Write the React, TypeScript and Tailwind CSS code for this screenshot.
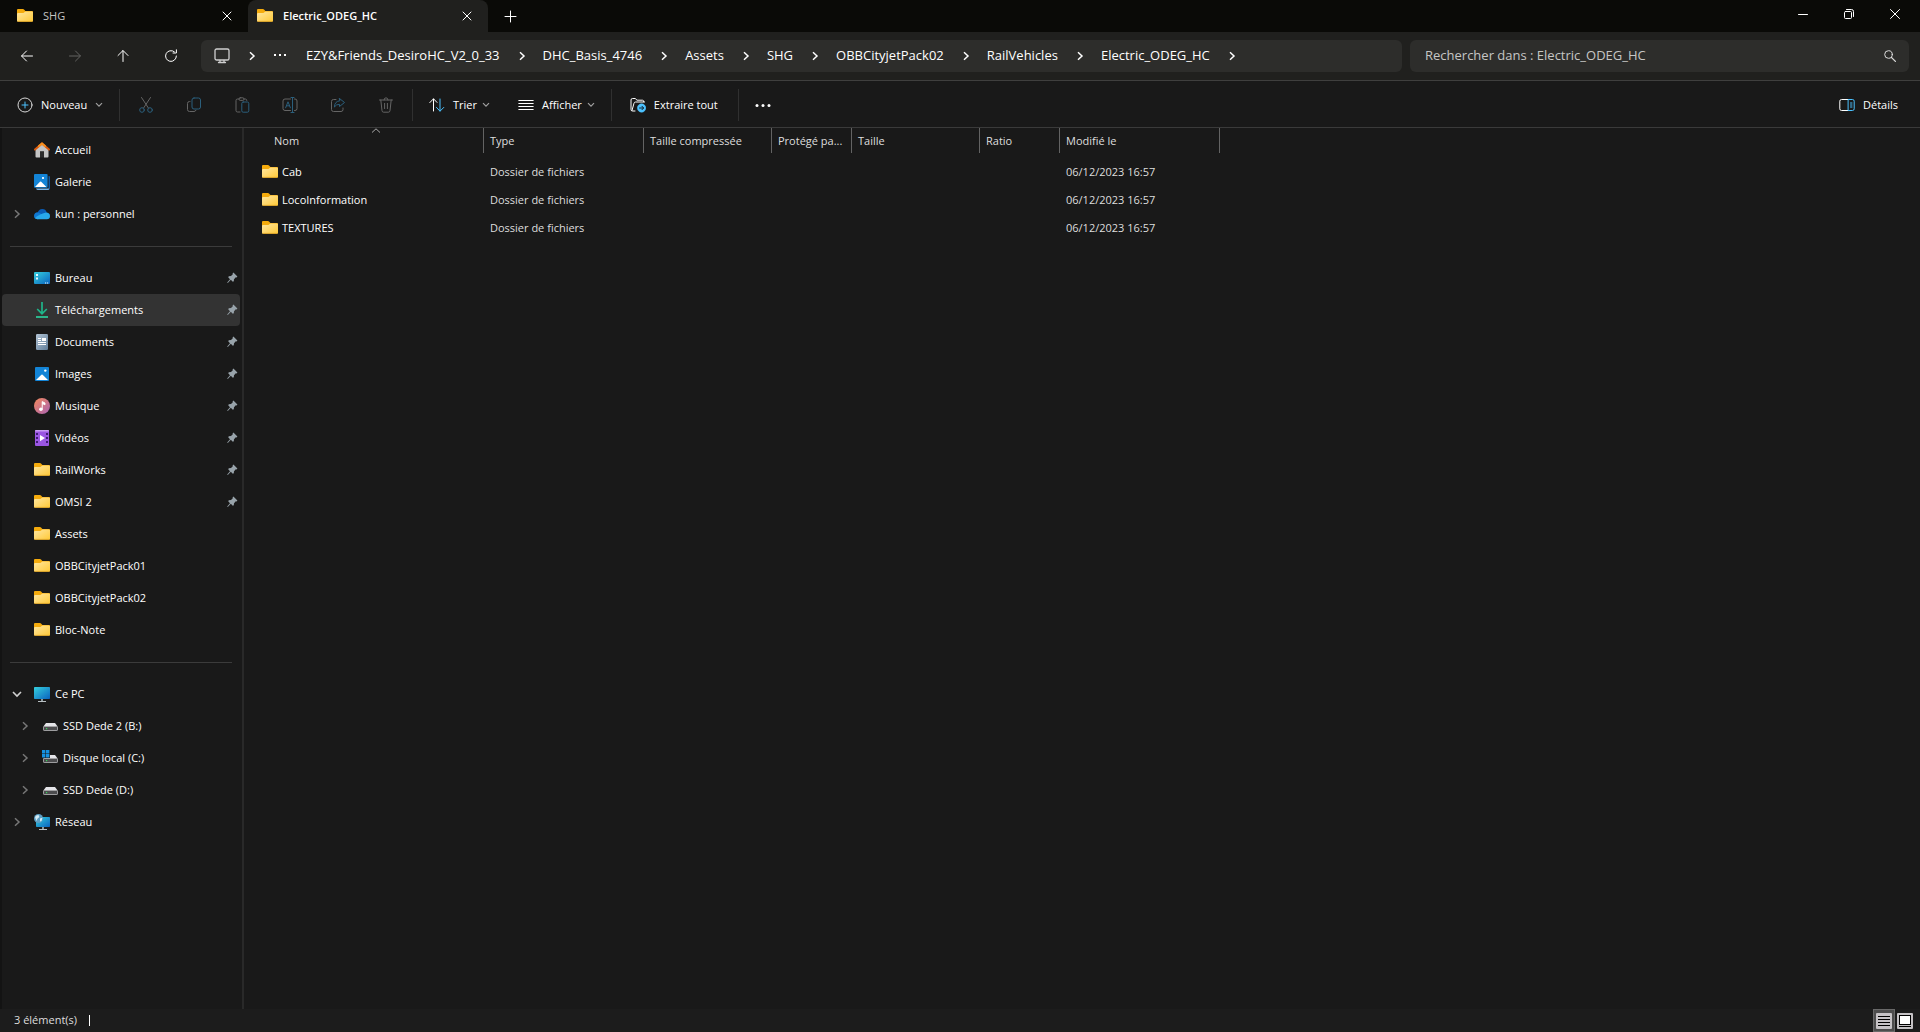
import { Fragment, useState, type ReactNode } from 'react';

type IconProps = { className?: string };

// Coloured shell icons

const FolderIcon = () => (
  <svg width="16" height="16" viewBox="0 0 16 16" className="shrink-0" aria-hidden="true">
    <defs>
      <linearGradient id="folderFront" x1="0" y1="0" x2="1" y2="1">
        <stop offset="0" stopColor="#ffe7a2" />
        <stop offset="1" stopColor="#ffc937" />
      </linearGradient>
    </defs>
    <path d="M0 2Q0 1 1 1H6Q6.6 1 7 1.4L8.4 3H15Q16 3 16 4V7H0Z" fill="#f5ab0c" />
    <path d="M0 6Q0 5 1 5H6.4L8.4 3.4H15Q16 3.4 16 4.4V12.8Q16 13.8 15 13.8H1Q0 13.8 0 12.8Z" fill="url(#folderFront)" />
    <path d="M.5 13.4H15.5" stroke="#e0a526" strokeWidth=".8" />
  </svg>
);

const HomeIcon = () => (
  <svg width="16" height="16" viewBox="0 0 16 16" className="shrink-0" aria-hidden="true">
    <path d="M1.5 7L8 1.6L14.5 7V14.5Q14.5 15.5 13.5 15.5H10V9.5H6V15.5H2.5Q1.5 15.5 1.5 14.5Z" fill="#c4c4c4" />
    <path d="M6 9.5H10V15.5H6Z" fill="#2b2b2b" />
    <path d="M1 7.6L8 1.4L15 7.6" fill="none" stroke="#d9590c" strokeWidth="2" strokeLinecap="round" strokeLinejoin="round" />
    <path d="M5 4L8 1.4L11 4" fill="none" stroke="#f78f1e" strokeWidth="2" strokeLinecap="round" strokeLinejoin="round" />
  </svg>
);

const GalleryIcon = () => (
  <svg width="16" height="16" viewBox="0 0 16 16" className="shrink-0" aria-hidden="true">
    <path d="M14.5 2H15Q16 2 16 3V14Q16 15 15 15H14.5Z" fill="#0c59a4" />
    <path d="M2 14.5H15L15.5 15Q15 16 14 16H4Q2.6 16 2 14.5Z" fill="#75b5ea" />
    <rect x="0" y="0" width="13.6" height="13.8" rx="1" fill="#1384d6" />
    <path d="M1 13L6 7.8Q6.6 7.2 7.2 7.8L12.4 13Z" fill="#fff" />
    <rect x="8" y="3" width="2" height="2" rx=".8" fill="#fff" />
  </svg>
);

const CloudIcon = () => (
  <svg width="16" height="16" viewBox="0 0 16 16" className="shrink-0" aria-hidden="true">
    <path d="M3.6 7Q4.6 3 8.4 3Q11.6 3 12.8 6.4L9 10H3Z" fill="#0a5cb5" />
    <path d="M0 10Q0 6.4 4 6.2L10.5 9.5L4 13.2Q0 13.2 0 10Z" fill="#1078d2" />
    <path d="M1 12Q5 8 12 6.4Q16 6.6 16 10Q16 13.2 12.8 13.2H3.6Q1.6 13 1 12Z" fill="#28a8ea" />
  </svg>
);

const DesktopIcon = () => (
  <svg width="16" height="16" viewBox="0 0 16 16" className="shrink-0" aria-hidden="true">
    <defs>
      <linearGradient id="screen" x1="0" y1="0" x2="1" y2="1">
        <stop offset="0" stopColor="#35cfdd" />
        <stop offset="1" stopColor="#0a63c0" />
      </linearGradient>
    </defs>
    <rect x="0" y="2" width="16" height="12" rx="1" fill="url(#screen)" />
    <path d="M2 4H4V6H2ZM2 7.5H4V9.5H2Z" fill="#e8fbff" />
    <path d="M11 12.4H12.2V13.6H11ZM13 12.4H14.2V13.6H13Z" fill="#e8fbff" />
  </svg>
);

const DownloadIcon = () => (
  <svg width="16" height="16" viewBox="0 0 16 16" className="shrink-0" aria-hidden="true">
    <path d="M8 0V11.5M3.2 7L8 11.8L12.8 7" fill="none" stroke="#1fb58a" strokeWidth="1.7" />
    <path d="M2 15H14" stroke="#2cc496" strokeWidth="1.8" />
  </svg>
);

const DocumentIcon = () => (
  <svg width="16" height="16" viewBox="0 0 16 16" className="shrink-0" aria-hidden="true">
    <defs>
      <linearGradient id="doc" x1="0" y1="0" x2="1" y2="1">
        <stop offset="0" stopColor="#b4c5d6" />
        <stop offset="1" stopColor="#5f7d99" />
      </linearGradient>
    </defs>
    <rect x="2" y="0" width="12" height="16" rx="1.2" fill="url(#doc)" />
    <path d="M4 4.5H7M4 6.5H7M4 8.5H12M4 10.5H12" stroke="#fff" />
    <rect x="8" y="4" width="4" height="3" fill="#fff" />
  </svg>
);

const PictureIcon = () => (
  <svg width="16" height="16" viewBox="0 0 16 16" className="shrink-0" aria-hidden="true">
    <rect x="1" y="1" width="14" height="14" rx="1" fill="#1384d6" />
    <path d="M2 14L7.4 8.8Q8 8.2 8.6 8.8L14 14Z" fill="#fff" />
    <circle cx="11.3" cy="4.6" r="1.2" fill="#fff" />
  </svg>
);

const MusicIcon = () => (
  <svg width="16" height="16" viewBox="0 0 16 16" className="shrink-0" aria-hidden="true">
    <defs>
      <linearGradient id="music" x1="0" y1="0" x2="1" y2="1">
        <stop offset="0" stopColor="#f58a5b" />
        <stop offset="1" stopColor="#a862b4" />
      </linearGradient>
    </defs>
    <circle cx="8" cy="8" r="8" fill="url(#music)" />
    <circle cx="6.9" cy="11.2" r="1.8" fill="#fff" />
    <path d="M8.2 11.2V3.6L11 5V6.8L8.8 5.8" fill="#fff" stroke="#fff" strokeWidth=".9" />
  </svg>
);

const VideoIcon = () => (
  <svg width="16" height="16" viewBox="0 0 16 16" className="shrink-0" aria-hidden="true">
    <rect x="1" y="0" width="14" height="16" rx="1" fill="#9a55e2" />
    <path d="M1 1Q1 0 2 0H14Q15 0 15 1V1.4H1Z" fill="#c79bf2" />
    <path d="M2 3H4V5H2ZM2 7H4V9H2ZM2 11H4V13H2ZM12 3H14V5H12ZM12 7H14V9H12ZM12 11H14V13H12Z" fill="#3f1a75" />
    <path d="M6 5L11 8L6 11.2Z" fill="#fff" />
  </svg>
);

const PcIcon = () => (
  <svg width="16" height="16" viewBox="0 0 16 16" className="shrink-0" aria-hidden="true">
    <rect x="0" y="1" width="16" height="12" rx=".8" fill="url(#screen)" />
    <path d="M7 13H9V15H7Z" fill="#8b979d" />
    <path d="M4 15.5H12" stroke="#b9c0c3" strokeWidth="1" />
  </svg>
);

const DriveIcon = ({ system }: { system?: boolean }) => (
  <svg width="16" height="16" viewBox="0 0 16 16" className="shrink-0" aria-hidden="true">
    <path d="M4 5H13L15.6 8.4H1.4Z" fill="#e4e4e8" />
    <rect x="1.5" y="8.5" width="14" height="4" rx=".6" fill="#4c4c4e" stroke="#a9a9ab" strokeWidth=".9" />
    <rect x="4" y="10" width="1.2" height="1.2" fill="#37d65a" />
    {system && (
      <>
        <rect x="0" y="0" width="8" height="8" fill="#1a1a1a" />
        <path d="M0 0H3.4V3.4H0ZM4 0H7.4V3.4H4ZM0 4H3.4V7.4H0ZM4 4H7.4V7.4H4Z" fill="#1590e0" />
      </>
    )}
  </svg>
);

const NetworkIcon = () => (
  <svg width="16" height="16" viewBox="0 0 16 16" className="shrink-0" aria-hidden="true">
    <rect x="2" y="3" width="14" height="10" rx=".8" fill="url(#screen)" />
    <path d="M8 13H10V15H8Z" fill="#8b979d" />
    <path d="M5 15.5H13" stroke="#b9c0c3" strokeWidth="1" />
    <circle cx="4.5" cy="4.5" r="4.5" fill="#5d9fc4" />
    <path d="M1 3Q2.5 .8 4.5 1L5.4 3L3.4 4.8L2.4 7ZM6 4.6L8.4 3.8L7.6 7L6 7.6Z" fill="#d5ecf6" />
  </svg>
);

const PinIcon = () => (
  <svg width="11" height="12" viewBox="0 0 11 12" className="shrink-0" aria-hidden="true">
    <path d="M6.4 .6L10.4 4.6L9.6 5.4L8.8 5.2L7 7.2L6.8 9.2L5.8 9.8L3.8 7.8L.8 11L.2 10.6L3 7.2L1.2 5.2L1.8 4.2L4 4L5.8 2.2L5.6 1.4Z" fill="#98a3aa" />
  </svg>
);

// Line icons

const Chevron = ({ className = '' }: IconProps) => (
  <svg width="8" height="10" viewBox="0 0 8 10" className={`shrink-0 ${className}`} fill="none" stroke="currentColor" strokeWidth="1.5" aria-hidden="true">
    <path d="M2 1.2L6 5L2 8.8" />
  </svg>
);

const ChevronDown = ({ className = '' }: IconProps) => (
  <svg width="8" height="6" viewBox="0 0 8 6" className={`shrink-0 text-[#a0a0a0] ${className}`} fill="none" stroke="currentColor" strokeWidth="1.2" aria-hidden="true">
    <path d="M1 1.2L4 4.2L7 1.2" />
  </svg>
);

const Line = ({ children, className = '' }: IconProps & { children: ReactNode }) => (
  <svg width="16" height="16" viewBox="0 0 16 16" className={`shrink-0 ${className}`} fill="none" stroke="currentColor" strokeLinecap="round" strokeLinejoin="round" aria-hidden="true">
    {children}
  </svg>
);

const CloseIcon = () => (
  <Line>
    <path d="M4 4L12 12M12 4L4 12" />
  </Line>
);

const ACCENT = '#4cc2ff';
const DIM_ACCENT = '#2b5f7c';

const fileActions: { label: string; icon: ReactNode }[] = [
  {
    label: 'Couper',
    icon: (
      <>
        <path d="M3.5 .5L10.4 11M12.5 .5L5.6 11" />
        <circle cx="4" cy="13" r="2.3" stroke={DIM_ACCENT} />
        <circle cx="12" cy="13" r="2.3" stroke={DIM_ACCENT} />
      </>
    ),
  },
  {
    label: 'Copier',
    icon: (
      <>
        <path d="M4 4.5H3.5Q1.5 4.5 1.5 6.5V12.5Q1.5 14.5 3.5 14.5H8Q9.5 14.5 10 13.2" />
        <rect x="6" y="1" width="8.5" height="11" rx="2" stroke={DIM_ACCENT} />
      </>
    ),
  },
  {
    label: 'Coller',
    icon: (
      <>
        <path d="M6 15H3.5Q2 15 2 13.5V3.5Q2 2 3.5 2H5M10 2H11.5Q12.6 2 12.8 3.4" />
        <rect x="5" y=".8" width="5" height="2.6" rx="1.2" />
        <rect x="7.8" y="5" width="7" height="10.2" rx="1.4" stroke={DIM_ACCENT} />
      </>
    ),
  },
  {
    label: 'Renommer',
    icon: (
      <>
        <path d="M8.5 2H3Q1 2 1 4V11.5Q1 13.5 3 13.5H8.5M12.5 2H13Q15 2 15 4V11.5Q15 13.5 13 13.5H12.5" />
        <path d="M3.6 10.8L6 4.8L8.4 10.8M4.4 8.8H7.6M10.5 .8V15.2M9 .5H12M9 15.5H12" stroke={DIM_ACCENT} />
      </>
    ),
  },
  {
    label: 'Partager',
    icon: (
      <>
        <path d="M6 2.5H3.5Q1.5 2.5 1.5 4.5V12.5Q1.5 14.5 3.5 14.5H11Q13 14.5 13 12.5V11" />
        <path d="M9.5 1.5L14.5 5.5L9.5 9.5V7.4Q6.4 7 4.4 10Q4.6 4.4 9.5 3.8Z" stroke={DIM_ACCENT} />
      </>
    ),
  },
  {
    label: 'Supprimer',
    icon: <path d="M1.5 3H14.5M6 3Q6 .8 8 .8Q10 .8 10 3M2.8 3L4 13.6Q4.2 15.2 5.6 15.2H10.4Q11.8 15.2 12 13.6L13.2 3M6.6 6.4V11.6M9.4 6.4V11.6" />,
  },
];

type Place = {
  name: string;
  icon: ReactNode;
  pinned?: boolean;
  expand?: 'open' | 'closed';
  nested?: boolean;
};

const places: Place[][] = [
  [
    { name: 'Accueil', icon: <HomeIcon /> },
    { name: 'Galerie', icon: <GalleryIcon /> },
    { name: 'kun : personnel', icon: <CloudIcon />, expand: 'closed' },
  ],
  [
    { name: 'Bureau', icon: <DesktopIcon />, pinned: true },
    { name: 'Téléchargements', icon: <DownloadIcon />, pinned: true },
    { name: 'Documents', icon: <DocumentIcon />, pinned: true },
    { name: 'Images', icon: <PictureIcon />, pinned: true },
    { name: 'Musique', icon: <MusicIcon />, pinned: true },
    { name: 'Vidéos', icon: <VideoIcon />, pinned: true },
    { name: 'RailWorks', icon: <FolderIcon />, pinned: true },
    { name: 'OMSI 2', icon: <FolderIcon />, pinned: true },
    { name: 'Assets', icon: <FolderIcon /> },
    { name: 'OBBCityjetPack01', icon: <FolderIcon /> },
    { name: 'OBBCityjetPack02', icon: <FolderIcon /> },
    { name: 'Bloc-Note', icon: <FolderIcon /> },
  ],
  [
    { name: 'Ce PC', icon: <PcIcon />, expand: 'open' },
    { name: 'SSD Dede 2 (B:)', icon: <DriveIcon />, expand: 'closed', nested: true },
    { name: 'Disque local (C:)', icon: <DriveIcon system />, expand: 'closed', nested: true },
    { name: 'SSD Dede (D:)', icon: <DriveIcon />, expand: 'closed', nested: true },
    { name: 'Réseau', icon: <NetworkIcon />, expand: 'closed' },
  ],
];

const crumbs = [
  'EZY&Friends_DesiroHC_V2_0_33',
  'DHC_Basis_4746',
  'Assets',
  'SHG',
  'OBBCityjetPack02',
  'RailVehicles',
  'Electric_ODEG_HC',
];

const columns = [
  { label: 'Type', width: 'w-40' },
  { label: 'Taille compressée', width: 'w-32' },
  { label: 'Protégé pa...', width: 'w-20' },
  { label: 'Taille', width: 'w-32' },
  { label: 'Ratio', width: 'w-20' },
  { label: 'Modifié le', width: 'w-40' },
];

const files = ['Cab', 'LocoInformation', 'TEXTURES'];

function TabBar() {
  return (
    <header className="flex h-8 items-stretch bg-[#0a0a07]">
      <div className="flex w-62 items-center gap-[10px] pr-[13px] pl-[17px]">
        <FolderIcon />
        <span className="flex-1 text-[11px] text-[#c4c4c2]">SHG</span>
        <button aria-label="Fermer l'onglet SHG"><CloseIcon /></button>
      </div>
      <div className="flex w-60 items-center gap-[10px] rounded-t-lg bg-[#20201e] pr-[13px] pl-[9px]">
        <FolderIcon />
        <span className="flex-1 text-[11px] font-semibold">Electric_ODEG_HC</span>
        <button aria-label="Fermer l'onglet Electric_ODEG_HC"><CloseIcon /></button>
      </div>
      <button className="ml-[14px] self-center" aria-label="Nouvel onglet">
        <Line><path d="M8.5 3V14M3 8.5H14" /></Line>
      </button>
      <div className="mr-[2px] ml-auto flex h-7 items-center">
        <button className="flex w-[46px] justify-center" aria-label="Réduire">
          <Line><path d="M3.5 8.5H12.5" /></Line>
        </button>
        <button className="flex w-[46px] justify-center" aria-label="Niveau inférieur">
          <Line><path d="M5.5 3.5H10.5Q12.5 3.5 12.5 5.5V10.5" /><rect x="3.5" y="5.5" width="7" height="7" rx="1" /></Line>
        </button>
        <button className="flex w-[46px] justify-center" aria-label="Fermer">
          <Line><path d="M3.5 3.5L12.5 12.5M12.5 3.5L3.5 12.5" /></Line>
        </button>
      </div>
    </header>
  );
}

function AddressBar() {
  return (
    <div className="flex h-[49px] items-center gap-2 border-b border-[#3f3f3e] bg-[#20201e] pr-[11px]">
      <nav className="flex w-[193px] shrink-0 items-center gap-8 pl-[19px]" aria-label="Navigation">
        <button aria-label="Précédent"><Line><path d="M13.5 8H2.8M7.5 3L2.5 8L7.5 13" /></Line></button>
        <button aria-label="Suivant" disabled className="text-[#636361]"><Line><path d="M2.5 8H13.2M8.5 3L13.5 8L8.5 13" /></Line></button>
        <button aria-label="Dossier parent"><Line><path d="M8 13.5V2.8M3 7.5L8 2.5L13 7.5" /></Line></button>
        <button aria-label="Actualiser"><Line><path d="M13.4 8A5.4 5.4 0 1 1 11.4 3.8M13.4 1.8V5H10" /></Line></button>
      </nav>
      <div className="flex h-8 flex-1 items-center rounded-md bg-[#2d2d2b] pl-[13px] text-[13px]">
        <button aria-label="Ce PC">
          <Line className="text-[#cfcfcf]"><rect x="1" y="1" width="14" height="11" rx="1.6" strokeWidth="1.3" /><path d="M6 12.5V14M10 12.5V14M4.5 14.5H11.5" strokeWidth="1.3" /></Line>
        </button>
        <Chevron className="mx-[18px]" />
        <button aria-label="Plus de dossiers" className="mr-5">
          <svg width="12" height="16" viewBox="0 0 12 16" fill="currentColor" aria-hidden="true">
            <path d="M0 6H2V8H0ZM5 6H7V8H5ZM10 6H12V8H10Z" />
          </svg>
        </button>
        {crumbs.map((name) => (
          <Fragment key={name}>
            <button>{name}</button>
            <Chevron className="mr-[17px] ml-[18px]" />
          </Fragment>
        ))}
      </div>
      <label className="flex h-8 w-[499px] items-center rounded-md bg-[#2d2d2b] pr-[11px] pl-[15px]">
        <input
          type="search"
          aria-label="Rechercher"
          placeholder="Rechercher dans : Electric_ODEG_HC"
          className="flex-1 bg-transparent text-[13px] outline-none placeholder:text-[#c6c6c5]"
        />
        <Line className="text-[#dcdcdc]"><circle cx="6.5" cy="6.5" r="3.8" /><path d="M9.4 9.4L13.4 13.4" strokeWidth="1.3" /></Line>
      </label>
    </div>
  );
}

const Separator = () => <div className="h-8 w-px bg-[#303030]" />;

function Toolbar() {
  return (
    <div className="flex h-[47px] items-center border-b border-[#3a3a3a] pt-[2px] text-[11px]" role="toolbar">
      <button className="flex w-[119px] items-center gap-2 pl-[17px]">
        <Line className="text-[#d8d8d8]"><circle cx="8" cy="8" r="7" /><path d="M8 5V11M5 8H11" stroke={ACCENT} /></Line>
        Nouveau
        <ChevronDown />
      </button>
      <Separator />
      <div className="flex items-center gap-8 px-[18px]">
        {fileActions.map(({ label, icon }) => (
          <button key={label} aria-label={label} disabled className="text-[#656565]">
            <Line>{icon}</Line>
          </button>
        ))}
      </div>
      <Separator />
      <button className="flex items-center gap-2 pl-4">
        <Line><path d="M4.5 14V2M.8 5.6L4.5 1.8L8 5.4" /><path d="M11 2V14M7.5 10.4L11 14.2L14.8 10.4" stroke={ACCENT} /></Line>
        Trier
        <ChevronDown className="-ml-[3px]" />
      </button>
      <button className="flex items-center gap-2 pr-4 pl-7">
        <Line><path d="M.8 3.5H15.2M.8 6.5H15.2M.8 9.5H15.2M.8 12.5H15.2" /></Line>
        Afficher
        <ChevronDown className="-ml-[3px]" />
      </button>
      <Separator />
      <button className="flex items-center gap-2 pr-5 pl-[18px]">
        <Line>
          <path d="M5 14H2.5Q1 14 1 12.5V3Q1 1.5 2.5 1.5H5.2L7 3.2H12.5Q13.8 3.2 13.8 4.6M2 13.5L4 6.2Q4.3 5 5.6 5H14.5" />
          <circle cx="11.6" cy="11" r="4.2" fill={ACCENT} stroke={ACCENT} strokeWidth=".5" />
          <path d="M9.6 11H13.4M12 9.3L13.6 11L12 12.7" stroke="#10202a" />
        </Line>
        Extraire tout
      </button>
      <Separator />
      <button className="ml-4" aria-label="Voir plus">
        <svg width="16" height="16" viewBox="0 0 16 16" fill="currentColor" aria-hidden="true">
          <circle cx="2" cy="8.5" r="1.5" />
          <circle cx="8" cy="8.5" r="1.5" />
          <circle cx="14" cy="8.5" r="1.5" />
        </svg>
      </button>
      <button className="mr-[22px] ml-auto flex items-center gap-2">
        <Line>
          <path d="M9.5 2.5H2.5Q.8 2.5 .8 4.2V11.8Q.8 13.5 2.5 13.5H9.5" />
          <path d="M9.5 2.5H13.5Q15.2 2.5 15.2 4.2V11.8Q15.2 13.5 13.5 13.5H9.5ZM11.5 6H13M11.5 8H13M11.5 10H13" stroke={ACCENT} />
        </Line>
        Détails
      </button>
    </div>
  );
}

function Sidebar() {
  const [selected, setSelected] = useState('Téléchargements');

  return (
    <aside className="w-[244px] shrink-0 border-r-2 border-l-2 border-r-[#292929] border-l-[#131313] pt-[6px] pr-[2px]">
      {places.map((group, i) => (
        <Fragment key={group[0].name}>
          {i > 0 && (
            <div className="flex h-8 items-center px-2">
              <hr className="w-full border-[#3b3b3b]" />
            </div>
          )}
          {group.map(({ name, icon, pinned, expand, nested }) => (
            <button
              key={name}
              onClick={() => setSelected(name)}
              className={`flex h-8 w-full items-center pr-[2px] text-left text-[11px] ${nested ? 'pl-4' : 'pl-2'} ${
                selected === name ? 'rounded-sm bg-[#333333]' : ''
              }`}
            >
              <span className="flex w-6">
                {expand === 'closed' && <Chevron className="ml-[3px] text-[#777777]" />}
                {expand === 'open' && (
                  <svg width="10" height="8" viewBox="0 0 10 8" className="ml-[2px]" fill="none" stroke="#d0d0d0" strokeWidth="1.6" aria-hidden="true">
                    <path d="M1 2L5 6L9 2" />
                  </svg>
                )}
              </span>
              {icon}
              <span className="ml-[5px] flex-1">{name}</span>
              {pinned && <PinIcon />}
            </button>
          ))}
        </Fragment>
      ))}
    </aside>
  );
}

function FileList() {
  return (
    <main className="flex-1">
      <table className="w-[976px] table-fixed border-separate border-spacing-0 text-left text-[11px] text-[#dedede]">
        <thead>
          <tr className="h-[25px]">
            <th scope="col" aria-sort="ascending" className="relative w-60 border-r border-[#636363] pt-[2px] pl-[30px] font-normal">
              Nom
              <svg width="10" height="6" viewBox="0 0 10 6" className="absolute top-0 left-[127px]" fill="none" stroke="#a8a8a8" aria-hidden="true">
                <path d="M1 4.5L5 .8L9 4.5" />
              </svg>
            </th>
            {columns.map(({ label, width }) => (
              <th key={label} scope="col" className={`${width} border-r border-[#636363] px-[6px] pt-[2px] font-normal whitespace-nowrap`}>
                {label}
              </th>
            ))}
          </tr>
        </thead>
        <tbody>
          <tr className="h-[5px]" aria-hidden="true"><td colSpan={7} /></tr>
          {files.map((name) => (
            <tr key={name} className="h-7">
              <td className="pl-[18px] text-white">
                <span className="flex items-center gap-1"><FolderIcon />{name}</span>
              </td>
              <td className="px-[6px]">Dossier de fichiers</td>
              <td colSpan={4} />
              <td className="px-[6px]">06/12/2023 16:57</td>
            </tr>
          ))}
        </tbody>
      </table>
    </main>
  );
}

function StatusBar() {
  return (
    <footer className="flex h-[23px] items-center bg-[#1c1c1c] pl-[14px] text-[11px] text-[#dedede]">
      3 élément(s)
      <div className="ml-3 h-[11px] w-px bg-white" />
      <div className="mr-[7px] ml-auto flex items-center gap-[2px]">
        <button aria-label="Détails" className="flex h-[23px] w-[22px] items-center justify-center border border-[#696969] bg-[#4d4d4d]">
          <svg width="16" height="16" viewBox="0 0 16 16" aria-hidden="true">
            <rect width="16" height="16" rx="1" fill="#c5c2c5" />
            <path d="M2 3.5H14M2 6.5H14M2 9.5H14M2 12.5H14" stroke="#000" />
          </svg>
        </button>
        <button aria-label="Grandes icônes">
          <svg width="16" height="16" viewBox="0 0 16 16" aria-hidden="true">
            <rect width="16" height="16" rx="1" fill="#c5c2c5" />
            <rect x="2.5" y="2.5" width="11" height="9" fill="#fff" stroke="#000" />
            <path d="M2 13.5H14" stroke="#000" />
          </svg>
        </button>
      </div>
    </footer>
  );
}

function App() {
  return (
    <div className="flex min-h-screen flex-col bg-[#191919] font-['Open_Sans','Noto_Sans',sans-serif] text-white">
      <TabBar />
      <AddressBar />
      <Toolbar />
      <div className="flex flex-1">
        <Sidebar />
        <FileList />
      </div>
      <StatusBar />
    </div>
  );
}

export default App;
